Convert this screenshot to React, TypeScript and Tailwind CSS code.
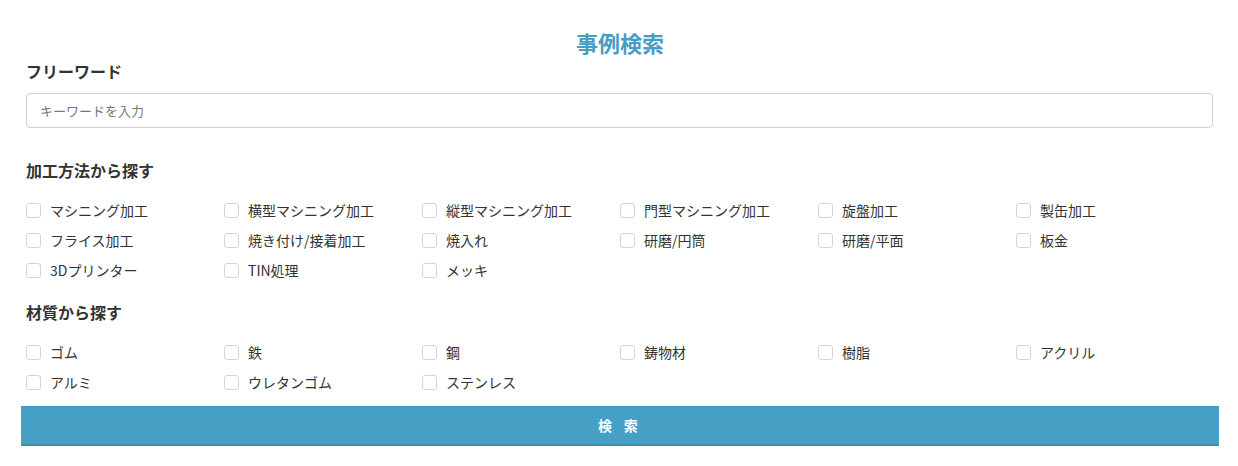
import React from 'react'

const methods = [
  'マシニング加工', '横型マシニング加工', '縦型マシニング加工', '門型マシニング加工', '旋盤加工', '製缶加工',
  'フライス加工', '焼き付け/接着加工', '焼入れ', '研磨/円筒', '研磨/平面', '板金',
  '3Dプリンター', 'TIN処理', 'メッキ',
]

const materials = ['ゴム', '鉄', '鋼', '鋳物材', '樹脂', 'アクリル', 'アルミ', 'ウレタンゴム', 'ステンレス']

function CheckItem({ label }: { label: string }) {
  return (
    <label className="flex items-center h-[30px] gap-[9px] cursor-pointer">
      <span className="w-[15px] h-[15px] rounded-[3px] border border-[#d4d4d4] bg-white shrink-0" />
      <span className="text-[14px] text-[#333] leading-none">{label}</span>
    </label>
  )
}

function CheckGrid({ items }: { items: string[] }) {
  return (
    <div className="grid grid-cols-6">
      {items.map((m) => (
        <CheckItem key={m} label={m} />
      ))}
    </div>
  )
}

export default function App() {
  return (
    <div
      className="w-[1238px] h-[466px] bg-white text-[#333]"
      style={{ fontFamily: '"Noto Sans CJK JP", "Noto Sans", sans-serif' }}
    >
      <div className="w-[1188px] ml-[26px] pt-[27px]">
        <h1 className="text-center text-[22px] font-bold leading-[30px] text-[#4a9cc4]">事例検索</h1>
        <h2 className="mt-[2px] text-[16px] font-bold leading-[24px]">フリーワード</h2>
        <input
          type="text"
          placeholder="キーワードを入力"
          className="mt-[10px] w-[1187px] h-[35px] px-[13px] border border-[#d0d0d0] rounded-[4px] text-[13px] placeholder:text-[#777] outline-none"
        />
        <h2 className="mt-[30px] text-[16px] font-bold leading-[24px]">加工方法から探す</h2>
        <div className="mt-[13px]">
          <CheckGrid items={methods} />
        </div>
        <h2 className="mt-[15px] text-[16px] font-bold leading-[24px]">材質から探す</h2>
        <div className="mt-[13px]">
          <CheckGrid items={materials} />
        </div>
        <button className="mt-[9px] -ml-[5px] w-[1198px] h-[40px] bg-[#46a0c6] border-b-2 border-[#3b8fb6] text-white text-[14px] font-semibold tracking-[0.3em]">
          検 索
        </button>
      </div>
    </div>
  )
}
